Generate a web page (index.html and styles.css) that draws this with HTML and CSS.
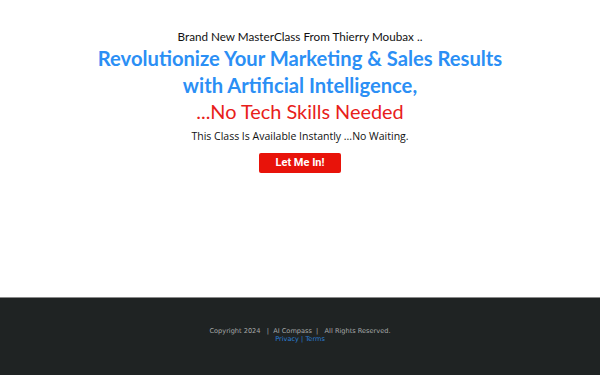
FILE: index.html
```html
<!DOCTYPE html>
<html>
<head>
<meta charset="utf-8">
<link rel="stylesheet" href="styles.css">
</head>
<body>
<main class="hero">
  <p class="kicker">Brand New MasterClass From Thierry Moubax ..</p>
  <h1 class="title">Revolutionize Your Marketing &amp; Sales Results<br>with Artificial Intelligence,</h1>
  <h2 class="subtitle">...No Tech Skills Needed</h2>
  <p class="note">This Class Is Available Instantly ...No Waiting.</p>
  <a class="cta" href="#">Let Me In!</a>
</main>
<footer class="footer">
  <p class="copy">Copyright 2024 &nbsp; | &nbsp;AI Compass &nbsp;| &nbsp; All Rights Reserved.</p>
  <p class="links"><a href="#">Privacy</a> | <a href="#">Terms</a></p>
</footer>
</body>
</html>
```
FILE: styles.css
```css
html, body {
  margin: 0;
  padding: 0;
  height: 100%;
}
body {
  display: flex;
  flex-direction: column;
  background: #fff;
  font-family: "Lato", "Liberation Sans", sans-serif;
}
.hero {
  height: 297px;
  display: flex;
  flex-direction: column;
  align-items: center;
  text-align: center;
  padding-top: 29px;
  box-sizing: border-box;
}
.kicker {
  margin: 0;
  font-size: 11.7px;
  line-height: 15px;
  color: #111;
}
.title {
  margin: 1px 0 0;
  font-size: 20.2px;
  line-height: 27px;
  font-weight: 700;
  color: #2b8ff5;
}
.subtitle {
  margin: 0;
  font-size: 19.9px;
  line-height: 24px;
  font-weight: 400;
  color: #e8201a;
}
.note {
  margin: 6px 0 0;
  font-family: "Open Sans", "Liberation Sans", sans-serif;
  font-size: 10.5px;
  line-height: 14px;
  color: #111;
}
.cta {
  margin-top: 10px;
  width: 82px;
  height: 20px;
  line-height: 20px;
  background: #e8130a;
  border-radius: 2px;
  color: #fff;
  font-family: "Roboto", "Liberation Sans", sans-serif;
  font-weight: 700;
  font-size: 11px;
  text-decoration: none;
}
.footer {
  flex: 1;
  background: #1f2323;
  border-top: 1px solid #8a8a8a;
  display: flex;
  flex-direction: column;
  align-items: center;
  padding-top: 29px;
  font-family: "DejaVu Sans", sans-serif;
  font-size: 6.6px;
  line-height: 8px;
  color: #a6a9a9;
}
.footer p {
  margin: 0;
}
.links a {
  color: #2a7fd6;
  text-decoration: none;
}
.links {
  color: #2a7fd6;
}
```
